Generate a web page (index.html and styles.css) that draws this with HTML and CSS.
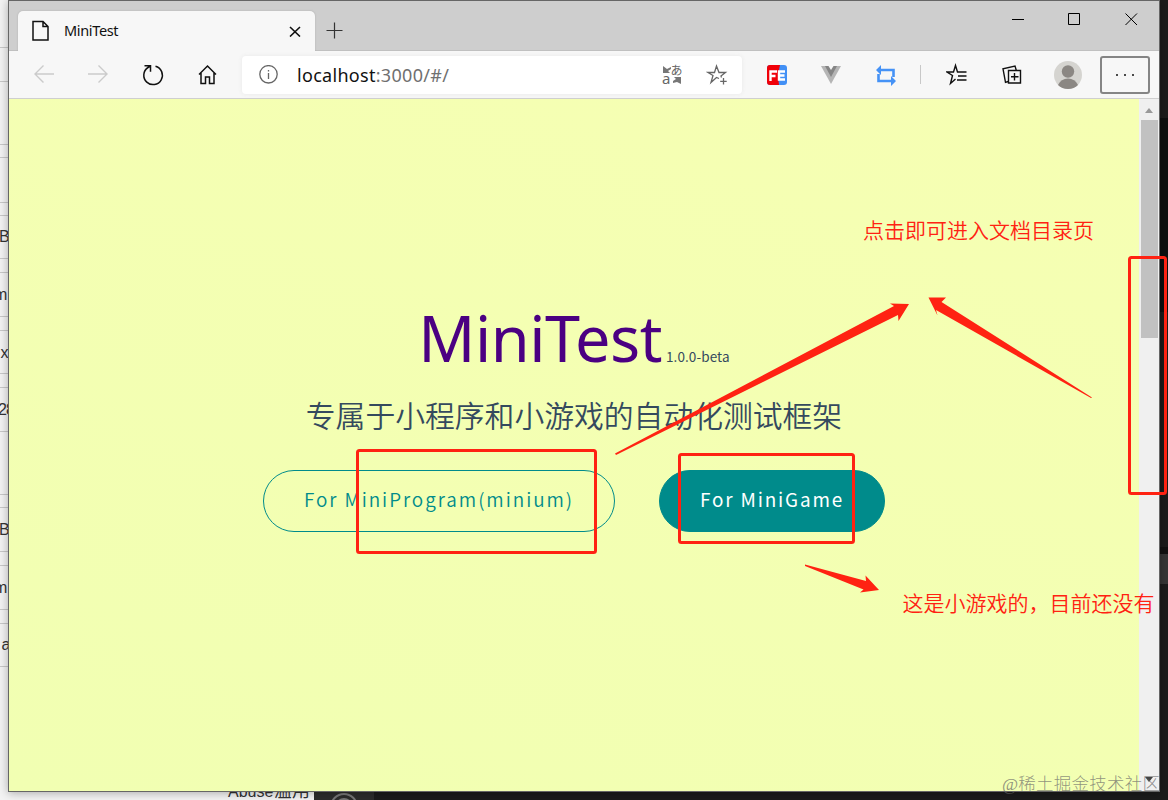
FILE: index.html
```html
<!DOCTYPE html>
<html lang="zh-CN">
<head>
<meta charset="utf-8">
<title>MiniTest</title>
<link rel="stylesheet" href="styles.css">
</head>
<body>
<div class="desktop">
  <svg class="backdrop" width="1168" height="800">
    <rect width="315" height="800" fill="#f3f3f3"/>
    <rect x="314" width="854" height="800" fill="#1b1b1b"/>
    <rect x="1160" y="118" width="8" height="194" fill="#0d0f0f"/>
    <rect x="1160" y="547" width="8" height="7" fill="#111"/>
    <rect x="1160" y="554" width="8" height="30" fill="#353535"/>
    <rect x="314" y="792" width="60" height="8" fill="#2c2c2c"/>
    <circle cx="344" cy="807" r="13" fill="none" stroke="#777" stroke-width="2"/>
    <circle cx="344" cy="807" r="8" fill="none" stroke="#777" stroke-width="2"/>
    <path d="M0 47.500h9M0 81.500h9M0 144.500h9M0 157.500h9M0 202.500h9M0 215.500h9M0 258.500h9M0 272.500h9M0 316.500h9M0 330.500h9M0 373.500h9M0 387.500h9M0 431.500h9M0 494.500h9M0 507.500h9M0 551.500h9M0 565.500h9M0 609.500h9M0 623.500h9M0 666.500h9" stroke="#c8c8c8"/>
    <g class="cells">
      <text x="-1" y="242">B</text><text x="-6" y="300">m</text><text x="0.500" y="358">x</text><text x="-2" y="415" letter-spacing="-1">28</text>
      <text x="-1" y="535">B</text><text x="-6" y="593">m</text><text x="1.500" y="650">a</text>
      <text x="228" y="797">Abuse<tspan x="274" font-size="18">滥用</tspan></text>
    </g>
  </svg>

  <div class="window">
    <div class="tabbar">
      <div class="tab">
        <svg class="tab-file" width="20" height="22" viewBox="0 0 20 22"><path d="M3 1.500h10l5 5v13.500H3zM13 1.500v5h5" fill="none" stroke="#111" stroke-width="1.500"/></svg>
        <span class="tab-title">MiniTest</span>
        <svg class="tab-close" width="12" height="12" viewBox="0 0 12 12"><path d="M1 2l10 9.500M11 2L1 11.500" stroke="#111" stroke-width="1.600"/></svg>
      </div>
      <svg class="newtab" width="18" height="18" viewBox="0 0 18 18"><path d="M8.500 .5v16M.5 8.500h16" stroke="#333" stroke-width="1.200"/></svg>
      <svg class="winctl" width="140" height="24" viewBox="0 0 140 24" fill="none" stroke="#000"><path d="M3 10.500h12"/><path d="M59.500 4.500h11v11h-11z"/><path d="M116.500 4.500l11.500 11.500M128 4.500l-11.500 11.500"/></svg>
    </div>

    <div class="toolbar">
      <svg class="nav" width="200" height="26" viewBox="0 0 200 26" fill="none">
        <g stroke="#cbcbcb" stroke-width="1.400"><path d="M21 12H2M10.500 3.500L2 12l8.500 8.500"/><path d="M55 12h19M65.500 3.500l8.500 8.500-8.500 8.500"/></g>
        <g stroke="#111" stroke-width="1.500"><path d="M122.500 4.300a9.300 9.300 0 1 1-7.500 1.200l2.500-1.500M111.500 3.800h6v6"/><path d="M166 12.500l8.500-8.500 8.500 8.500M168 11v10.500h4.500v-6.500h4v6.500h4.500V11"/></g>
      </svg>
      <div class="address">
        <svg width="20" height="20" viewBox="0 0 20 20" fill="none" stroke="#666" stroke-width="1.300"><circle cx="10.500" cy="9.300" r="8.700"/><path d="M10.500 8v6M10.500 5v1.500"/></svg>
        <span class="url">localhost<i>:3000/#/</i></span>
        <svg class="translate" width="22" height="22" viewBox="0 0 22 22"><path d="M1 2v7h7L6 7l3-2V3L5 5z" fill="#777"/><text x="8.500" y="11" class="kana">あ</text><text x="0" y="20" class="latin">a</text><path d="M19 20v-7h-7l2 2-3 2v2l4-1z" fill="#777"/></svg>
        <svg class="fav" width="22" height="22" viewBox="0 0 22 22" fill="none" stroke="#666" stroke-width="1.300"><path d="M13 14.500L10.500 13.500 5 18.500l2-7L2 8.500h6.500L10.500 2l2.500 6.500h6.500l-4.500 3.500.5 1.500M17.500 14v6.500M14.200 17.300h6.500"/></svg>
      </div>
      <svg class="extensions" width="160" height="24" viewBox="0 0 160 24">
        <rect x="1" y="2" width="20" height="20" rx="3" fill="#4290f5"/><path d="M4 2h10l-2 10 1 10H4a3 3 0 0 1-3-3V5a3 3 0 0 1 3-3z" fill="#f00008"/>
        <path d="M4.500 18V8.500H11M4.500 13H9.500M19 8.500h-6v8h6M13 12.500h5.500" fill="none" stroke="#fff" stroke-width="2.400"/>
        <path d="M55 3h20L65 21z" fill="#b5b5b5"/><path d="M59 3h12l-6 11z" fill="#858585"/><path d="M62.500 3h5L65 7z" fill="#f7f7f7"/>
        <g fill="none" stroke="#4592f6" stroke-width="2.600"><path d="M114 7h13.500v7M126 18h-13.500v-7"/></g><path d="M110 7l5-5v10zM130 18l-5-5v10z" fill="#4592f6"/>
        <path d="M154.500 2v19" stroke="#c8c8c8"/>
      </svg>
      <svg class="tools" width="146" height="30" viewBox="0 0 146 30">
        <g fill="none" stroke="#111" stroke-width="1.400"><path d="M9.500 19L4.500 23.500l2-8L1 12h6.500l2-6.500 2 6.500h9M12 16h8.500M11 20h9.500"/><path d="M62.500 10.500h12v12.500H62.500zM68.500 13v7.500M65 16.800h7.500M62 21.500l-2.500.8-2.500-13.500L69 6l1.200 4"/></g>
        <circle cx="122" cy="15" r="14" fill="#d5d4d0"/><circle cx="122" cy="11.500" r="6.200" fill="#8b8783"/><path d="M112 25q3-6.500 10-6.500t10 6.500q-4 4-10 4t-10-4z" fill="#8b8783"/>
      </svg>
      <div class="more"><b></b><b></b><b></b></div>
    </div>

    <div class="viewport">
      <main class="cover">
        <h1 class="title"><span>MiniTest</span><small>1.0.0-beta</small></h1>
        <p class="tagline">专属于小程序和小游戏的自动化测试框架</p>
        <div class="actions"><a class="button">For MiniProgram(minium)</a><a class="button filled">For MiniGame</a></div>
      </main>
      <div class="scrollbar"><span class="up"></span><span class="thumb"></span><span class="down"></span></div>
    </div>
  </div>

  <svg class="markup" width="1168" height="800">
    <g fill="none" stroke="#ff2212" stroke-width="3"><rect x="357.500" y="450.500" width="238" height="102" rx="2"/><rect x="679.500" y="454.500" width="174" height="88" rx="2"/><rect x="1129.500" y="257.500" width="36" height="236" rx="2"/></g>
    <g fill="#ff2212"><path d="M615 453.500L894 306 890 303.500 909 304 898.500 321 898 315 616 455z"/><path d="M928.500 297.500L946 297.500 941.500 302 1092 397.500 1091 398 936 310 937.500 315.500z"/><path d="M805 564.500L866 581 865.500 575.500 879 590 860 592.500 863.500 589.500 805 566z"/></g>
    <g class="notes"><text x="863" y="238">点击即可进入文档目录页</text><text x="902.500" y="611">这是小游戏的，目前还没有</text></g>
    <text class="watermark" x="1002" y="790" textLength="158">@稀土掘金技术社区</text>
  </svg>
</div>
</body>
</html>
```
FILE: styles.css
```css
body { margin: 0; font-family: "Noto Sans", "Noto Sans CJK SC", sans-serif; }
.desktop { position: relative; width: 1168px; height: 800px; overflow: hidden; }
.backdrop, .markup { position: absolute; left: 0; top: 0; }
.cells { font: 16px "Liberation Sans", "Noto Sans CJK SC", sans-serif; fill: #333; }
.window { position: absolute; left: 8px; top: 0; box-sizing: border-box; width: 1152px; height: 792px; border: 1px solid #666; box-shadow: 0 1px 9px rgba(0,0,0,.3); display: flex; flex-direction: column; background: #f7f7f7; }
.tabbar { height: 50px; box-sizing: border-box; background: #cecece; border-bottom: 1px solid #c0c0c0; display: flex; align-items: flex-start; }
.tab { box-sizing: border-box; width: 297px; height: 40px; margin: 10px 0 0 9px; padding: 0 14px 0 12px; border-radius: 5px 5px 0 0; background: #f7f7f7; display: flex; align-items: center; box-shadow: 0 0 2px #aaa; }
.tab-title { font-size: 14.500px; letter-spacing: -.35px; line-height: 20px; margin: -2px 0 0 14px; flex: 1; color: #111; }
.newtab { margin: 21px 0 0 11px; }
.winctl { margin: 8px 10px 0 auto; }
.toolbar { height: 48px; box-sizing: border-box; border-bottom: 1px solid #cfcfcf; display: flex; align-items: center; background: #f7f7f7; }
.nav { margin-left: 24px; }
.address { box-sizing: border-box; width: 500px; height: 38px; margin-left: 9px; padding: 0 14px 0 16px; background: #fff; border-radius: 4px; box-shadow: 0 0 4px #e8e8e8; display: flex; align-items: center; }
.url { font-size: 18px; letter-spacing: .3px; margin-left: 19px; flex: 1; color: #111; }
.url i { font-style: normal; color: #707070; }
.translate { margin-right: 22px; }
.kana { font: 12px "Noto Sans CJK JP", sans-serif; fill: #666; }
.latin { font: 15px "Noto Sans", sans-serif; fill: #666; }
.extensions { margin-left: 24px; }
.tools { flex: none; margin-left: 20px; }
.more { box-sizing: border-box; flex: none; width: 50px; height: 38px; margin-left: 8px; border: 2px solid #858585; border-radius: 3px; display: flex; align-items: center; justify-content: center; gap: 6px; }
.more b { width: 2px; height: 2px; background: #111; border-radius: 1px; }
.viewport { flex: 1; display: flex; min-height: 0; }
.cover { width: 1130px; background: linear-gradient(200deg, #f6ffb3, #f1ffb2); display: flex; flex-direction: column; align-items: center; }
.title { height: 88px; margin: 195px 0 0; display: flex; align-items: baseline; font-weight: 400; line-height: 88px; color: #4b0082; font-size: 63px; letter-spacing: -.5px; }
.title small { font: 13.500px "Noto Sans CJK SC", sans-serif; letter-spacing: .1px; color: #34495e; margin-left: 4px; }
.tagline { margin: 10px 0 0; height: 44px; font: 29.800px/44px "Noto Sans CJK SC DemiLight", "Noto Sans CJK SC", sans-serif; color: #34495e; white-space: nowrap; }
.actions { display: flex; gap: 44px; margin-top: 34px; }
.button { box-sizing: border-box; width: 352px; height: 62px; border: 1px solid #008b8b; border-radius: 31px; color: #008b8b; font: 18.900px/56px "Noto Sans CJK SC DemiLight", "Noto Sans CJK SC", sans-serif; letter-spacing: 1.960px; text-align: center; white-space: nowrap; }
.filled { width: 226px; background: #008b8b; color: #fff; font-family: "Noto Sans CJK SC", sans-serif; letter-spacing: 1.850px; }
.scrollbar { box-sizing: border-box; width: 20px; padding: 9px 2px 9px 2px; background: #f0f0f0; display: flex; flex-direction: column; align-items: center; }
.up, .down { border: 4.500px solid transparent; border-top: 0; border-bottom: 5px solid #999; }
.thumb { width: 17px; height: 218px; flex: none; margin-top: 7px; background: #c1c1c1; }
.down { margin-top: auto; border-bottom: 0; border-top: 5px solid #444; }
.notes { font: 21px "Noto Sans CJK SC DemiLight", "Noto Sans CJK SC", sans-serif; fill: #ff2212; }
.watermark { font: 17.500px "Liberation Serif", "Noto Sans CJK SC", serif; font-weight: 300; fill: #666; fill-opacity: .7; }
```
